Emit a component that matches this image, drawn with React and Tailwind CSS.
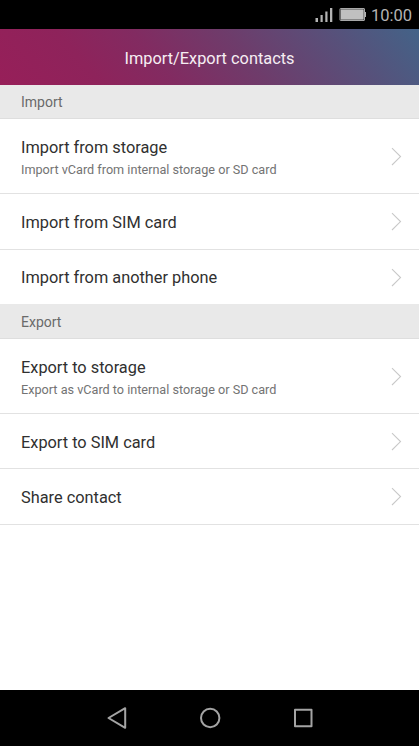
import React from "react";

const sections = [
  {
    title: "Import",
    headerClass: "h-[34px] pt-[2px]",
    items: [
      {
        label: "Import from storage",
        description: "Import vCard from internal storage or SD card",
        rowClass: "h-[75px] border-b",
      },
      { label: "Import from SIM card", rowClass: "h-14 border-b" },
      { label: "Import from another phone", rowClass: "h-[54px]" },
    ],
  },
  {
    title: "Export",
    headerClass: "h-[35px] pt-[3px]",
    items: [
      {
        label: "Export to storage",
        description: "Export as vCard to internal storage or SD card",
        rowClass: "h-[75px] border-b",
      },
      { label: "Export to SIM card", rowClass: "h-[55px] border-b pt-px" },
      { label: "Share contact", rowClass: "h-14 border-b" },
    ],
  },
];

function StatusBar() {
  return (
    <div className="h-[29px] shrink-0 bg-black flex items-center justify-end pr-[7px] text-[#b4b4b4]">
      <svg width="18" height="29" viewBox="0 0 18 29" fill="currentColor" className="mr-[6px]">
        <rect x="0.5" y="18" width="2.5" height="4" />
        <rect x="5.5" y="15" width="2.2" height="7" />
        <rect x="10.3" y="11.5" width="2.2" height="10.5" />
        <rect x="15" y="8" width="2.3" height="14" />
      </svg>
      <svg width="27" height="29" viewBox="0 0 27 29" className="mr-[5px]">
        <rect x="1" y="8.5" width="24.5" height="12" rx="0.5" fill="none" stroke="#a8a8a8" />
        <rect x="1.8" y="9.3" width="22.9" height="10.4" fill="#c0c0c0" />
        <rect x="26" y="12" width="1" height="5" fill="#b4b4b4" />
      </svg>
      <span className="text-[16.5px] leading-[29px] pt-[2px]">10:00</span>
    </div>
  );
}

function Chevron() {
  return (
    <svg
      width="11"
      height="19"
      viewBox="0 0 11 19"
      fill="none"
      stroke="#c8c8c8"
      strokeWidth="1.1"
      className="shrink-0"
    >
      <path d="M1 1.2 9.5 9.6 1 18" />
    </svg>
  );
}

function ListItem({ label, description, rowClass }) {
  return (
    <button
      type="button"
      className={`w-full flex items-center justify-between pl-[21px] pr-[17px] border-[#e2e2e2] text-left ${rowClass}`}
    >
      <span className={description ? "pt-[4px]" : "pt-[2px]"}>
        <span className="block text-[16.33px] leading-[22px] text-[#303030]">{label}</span>
        {description && (
          <span className="block text-[12.65px] leading-[21px] text-[#737373]">
            {description}
          </span>
        )}
      </span>
      <Chevron />
    </button>
  );
}

function NavBar() {
  return (
    <div className="h-14 shrink-0 bg-black flex justify-center">
      <svg
        width="240"
        height="56"
        viewBox="0 0 240 56"
        fill="none"
        stroke="#a4a4a4"
        strokeWidth="2"
        strokeLinejoin="round"
      >
        <path d="M35.2 18.2v19.6L18.5 28Z" />
        <circle cx="120.2" cy="28" r="9.2" />
        <rect x="205" y="19.8" width="16.5" height="16.5" />
      </svg>
    </div>
  );
}

export default function App() {
  return (
    <div className="w-full h-screen flex flex-col overflow-hidden bg-white font-['Roboto',sans-serif]">
      <StatusBar />

      <header className="h-14 shrink-0 flex items-center justify-center bg-[linear-gradient(50deg,#971f59_0%,#8e235b_22%,#822b61_38%,#6e3c6b_58%,#58507a_80%,#436388_100%)]">
        <h1 className="text-[16.35px] text-[#f6eef3] pt-[4px]">Import/Export contacts</h1>
      </header>

      <main className="flex-1">
        {sections.map((section) => (
          <section key={section.title}>
            <h2
              className={`flex items-center pl-[21px] bg-[#e9e9e9] border-b border-[#dedede] text-[14px] text-[#6a6a6a] ${section.headerClass}`}
            >
              {section.title}
            </h2>
            {section.items.map((item) => (
              <ListItem key={item.label} {...item} />
            ))}
          </section>
        ))}
      </main>

      <NavBar />
    </div>
  );
}
